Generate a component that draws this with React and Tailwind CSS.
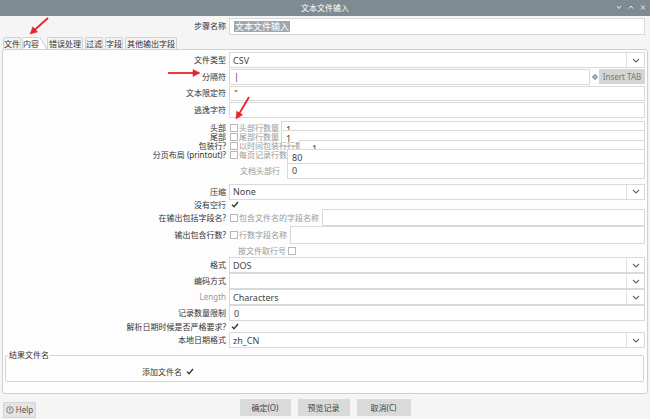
import React from 'react';

const labelCol = 'w-[223px] shrink-0 text-right text-[8px] leading-none';

function Check() {
  return (
    <svg width="8" height="7" viewBox="0 0 8 7" className="shrink-0">
      <path d="M1 3.6 L3 5.8 L7 1" fill="none" stroke="#333" strokeWidth="1.4" />
    </svg>
  );
}

function CheckBox({ className = '' }) {
  return <span className={`block w-[8px] h-[8px] border border-[#b8b8b8] bg-white shrink-0 ${className}`} />;
}

function Chevron() {
  return (
    <svg width="8" height="5" viewBox="0 0 8 5">
      <path d="M1 1 L4 4 L7 1" fill="none" stroke="#666" strokeWidth="1.1" />
    </svg>
  );
}

function Field({ className = '', children }) {
  return (
    <div className={`border border-[#d9d9d9] bg-white flex items-center pl-[4px] text-[9px] leading-none text-[#444] min-w-0 ${className}`}>
      {children}
    </div>
  );
}

function Select({ value }) {
  return (
    <div className="flex-1 h-[16px] border border-[#d9d9d9] bg-white flex items-center pl-[3px] text-[9px] leading-none text-[#444]">
      <span className="flex-1">{value}</span>
      <span className="w-[18px] h-[14px] border-l border-[#e0e0e0] flex items-center justify-center">
        <Chevron />
      </span>
    </div>
  );
}

function Row({ label, className = 'h-[16px]', labelClass = 'text-[#333]', children }) {
  return (
    <div className={`flex items-center gap-[3px] ${className}`}>
      <div className={`${labelCol} ${labelClass}`}>{label}</div>
      <div className="flex-1 flex items-center min-w-0 h-full">{children}</div>
    </div>
  );
}

function Sub({ children, className = '' }) {
  return <span className={`text-[8px] leading-none text-[#9a9a9a] whitespace-nowrap shrink-0 ${className}`}>{children}</span>;
}

function Tab({ children, active, className = '' }) {
  return (
    <div
      className={`h-[12px] px-0 flex items-center text-[8px] leading-none text-[#333] border border-b-0 border-[#d2d2d2] rounded-t-[2px] ${
        active ? 'bg-white' : 'bg-[#f4f4f4]'
      } ${className}`}
    >
      {children}
    </div>
  );
}

function Button({ children, className = '' }) {
  return (
    <div className={`h-[17px] bg-[#dadada] flex items-center justify-center text-[8px] text-[#444] ${className}`}>{children}</div>
  );
}

export default function App() {
  return (
    <div className="w-[650px] h-[419px] relative overflow-hidden bg-[#f5f5f5] font-['Noto_Sans','Noto_Sans_CJK_SC',sans-serif] text-[#333]">
      {/* title bar */}
      <div className="h-[16px] bg-[#7f8b92] flex items-center relative">
        <div className="flex-1 text-center text-[8px] text-white leading-none">文本文件输入</div>
        <div className="absolute right-[4px] top-[5px] flex gap-[6px]">
          <svg width="6" height="5" viewBox="0 0 6 5"><path d="M1 1 L3 3.5 L5 1" fill="none" stroke="#e8ecee" strokeWidth="1" /></svg>
          <svg width="6" height="5" viewBox="0 0 6 5"><path d="M1 3.5 L3 1 L5 3.5" fill="none" stroke="#e8ecee" strokeWidth="1" /></svg>
          <svg width="6" height="5" viewBox="0 0 6 5"><path d="M1 0.5 L5 4.5 M5 0.5 L1 4.5" fill="none" stroke="#e8ecee" strokeWidth="1" /></svg>
        </div>
      </div>

      {/* step name */}
      <div className="flex items-center gap-[3px] h-[18px] mt-[1px] pr-[5px]">
        <div className="w-[226px] shrink-0 text-right text-[8px] leading-none">步骤名称</div>
        <Field className="flex-1 h-[17px] pl-[2px]">
          <span className="bg-[#9fa8ae] text-white text-[9px] px-[1px] py-[1px]">文本文件输入</span>
        </Field>
      </div>

      {/* tabs */}
      <div className="flex items-end h-[13px] pl-[3px] mt-[1px]">
        <Tab className="mr-[1px]">文件</Tab>
        <div className="flex items-end">
          <Tab active>内容</Tab>
          <svg width="8" height="12" viewBox="0 0 8 12" className="-ml-[1px]">
            <polygon points="0,0 1,0 8,12 0,12" fill="#ffffff" />
            <path d="M1 0.5 L8 12" stroke="#c8c8c8" strokeWidth="1" />
          </svg>
        </div>
        <Tab className="px-[1px]">错误处理</Tab>
        <Tab className="ml-[2px]">过滤</Tab>
        <Tab className="ml-[2px]">字段</Tab>
        <Tab className="ml-[2px] px-[1px]">其他输出字段</Tab>
      </div>

      {/* panel */}
      <div className="ml-[2px] w-[646px] h-[345px] border border-[#d0d0d0] rounded-[3px] bg-[#fdfdfd] pt-[2px] pr-[2px]">
        <Row label="文件类型" className="h-[16px]">
          <Select value="CSV" />
        </Row>
        <Row label="分隔符" className="h-[17px]">
          <Field className="flex-1 h-[16px]">|</Field>
          <span className="w-[9px] flex justify-center">
            <svg width="6" height="6" viewBox="0 0 6 6"><path d="M3 0 L6 3 L3 6 L0 3 Z" fill="#5f7f9c" /><path d="M3 1.5 V4.5 M1.5 3 H4.5" stroke="#dfe8f0" strokeWidth="0.8" /></svg>
          </span>
          <div className="w-[46px] h-[15px] bg-[#d5d5d5] flex items-center justify-center text-[8px] text-[#777]">Insert TAB</div>
        </Row>
        <Row label="文本限定符" className="h-[16px]">
          <Field className="flex-1 h-[15px]">"</Field>
        </Row>
        <Row label="逃逸字符" className="h-[17px]">
          <Field className="flex-1 h-[16px]" />
        </Row>

        {/* header / footer block */}
        <div className="pt-[5px] h-[65px]">
          <Row label="头部" className="h-[9px]">
            <CheckBox className="ml-[1px]" />
            <Sub className="ml-[1px]">头部行数量</Sub>
            <Field className="flex-1 h-[17px] ml-[2px] mt-[4px] shrink-0">1</Field>
          </Row>
          <Row label="尾部" className="h-[9px]">
            <CheckBox className="ml-[1px]" />
            <Sub className="ml-[1px]">尾部行数量</Sub>
            <Field className="flex-1 h-[17px] ml-[2px] mt-[4px] shrink-0">1</Field>
          </Row>
          <Row label="包装行?" className="h-[9px]">
            <CheckBox className="ml-[1px]" />
            <Sub className="ml-[1px]">以时间包装行行数</Sub>
            <Field className="flex-1 h-[17px] -ml-[4px] mt-[6px] shrink-0 pl-[12px]">1</Field>
          </Row>
          <Row label="分页布局 (printout)?" className="h-[9px]">
            <CheckBox className="ml-[1px]" />
            <Sub className="ml-[1px]">每页记录行数</Sub>
            <Field className="flex-1 h-[17px] mt-[6px] shrink-0">80</Field>
          </Row>
          <Row label="" className="h-[24px] items-end pb-[1px]">
            <div className="flex items-center w-full">
              <Sub className="ml-[11px] text-[#8a8a8a]">文档头部行</Sub>
              <Field className="flex-1 h-[16px] ml-[7px]">0</Field>
            </div>
          </Row>
        </div>

        <Row label="压缩" className="h-[17px]">
          <Select value="None" />
        </Row>
        <Row label="没有空行" className="h-[9px]">
          <span className="ml-[2px]"><Check /></span>
        </Row>
        <Row label="在输出包括字段名?" className="h-[17px]">
          <CheckBox className="ml-[1px]" />
          <Sub className="ml-[1px]">包含文件名的字段名称</Sub>
          <Field className="flex-1 h-[17px] ml-[3px]" />
        </Row>
        <Row label="输出包含行数?" className="h-[18px]">
          <CheckBox className="ml-[1px]" />
          <Sub className="ml-[1px]">行数字段名称</Sub>
          <Field className="flex-1 h-[18px] ml-[3px]" />
        </Row>
        <Row label="" className="h-[13px]">
          <Sub className="ml-[9px]">按文件取行号</Sub>
          <CheckBox className="ml-[2px]" />
        </Row>
        <Row label="格式" className="h-[16px]">
          <Select value="DOS" />
        </Row>
        <Row label="编码方式" className="h-[16px]">
          <Select value="" />
        </Row>
        <Row label="Length" className="h-[16px]" labelClass="text-[#999]">
          <Select value="Characters" />
        </Row>
        <Row label="记录数量限制" className="h-[16px]">
          <Field className="flex-1 h-[16px]">0</Field>
        </Row>
        <Row label="解析日期时候是否严格要求?" className="h-[11px]">
          <span className="ml-[2px]"><Check /></span>
        </Row>
        <Row label="本地日期格式" className="h-[16px]">
          <Select value="zh_CN" />
        </Row>

        <fieldset className="ml-[2px] mr-[1px] mt-[3px] border border-[#d4d4d4] rounded-[2px]">
          <legend className="text-[8px] leading-[8px] ml-[2px] px-[1px]">结果文件名</legend>
          <div className="h-[22px] pt-[3px] flex items-center gap-[4px]">
            <div className="w-[176px] text-right text-[8px] leading-none">添加文件名</div>
            <Check />
          </div>
        </fieldset>
      </div>

      {/* bottom buttons */}
      <div className="grid grid-cols-[1fr_auto_1fr] items-start mt-[5px] h-[20px]">
        <div className="pl-[3px] pt-[3px]">
          <div className="w-[33px] h-[16px] bg-[#e4e4e4] border border-[#d6d6d6] flex items-center justify-center gap-[2px] text-[8px] text-[#555]">
            <svg width="8" height="8" viewBox="0 0 8 8">
              <circle cx="4" cy="4" r="3.3" fill="none" stroke="#666" strokeWidth="0.8" />
              <path d="M4 2 V4.7 M4 5.6 V6.2" stroke="#666" strokeWidth="0.9" />
            </svg>
            Help
          </div>
        </div>
        <div className="flex gap-[7px]">
          <Button className="w-[51px]">确定(O)</Button>
          <Button className="w-[52px]">预览记录</Button>
          <Button className="w-[54px]">取消(C)</Button>
        </div>
        <div />
      </div>

      {/* red annotation arrows */}
      <svg className="absolute inset-0 pointer-events-none" width="650" height="419" viewBox="0 0 650 419">
        <g stroke="#e8222a" strokeWidth="1.8" fill="#e8222a">
          <line x1="48" y1="18" x2="34" y2="30.5" />
          <polygon points="30,34 37.5,32 32.9,26.7" strokeWidth="0.5" />
          <line x1="168" y1="73" x2="194" y2="73" />
          <polygon points="200,73 193,69.5 193,76.5" strokeWidth="0.5" />
          <line x1="249" y1="97" x2="239" y2="114" />
          <polygon points="236,119 242.6,114.8 236.6,111.2" strokeWidth="0.5" />
        </g>
      </svg>
    </div>
  );
}
